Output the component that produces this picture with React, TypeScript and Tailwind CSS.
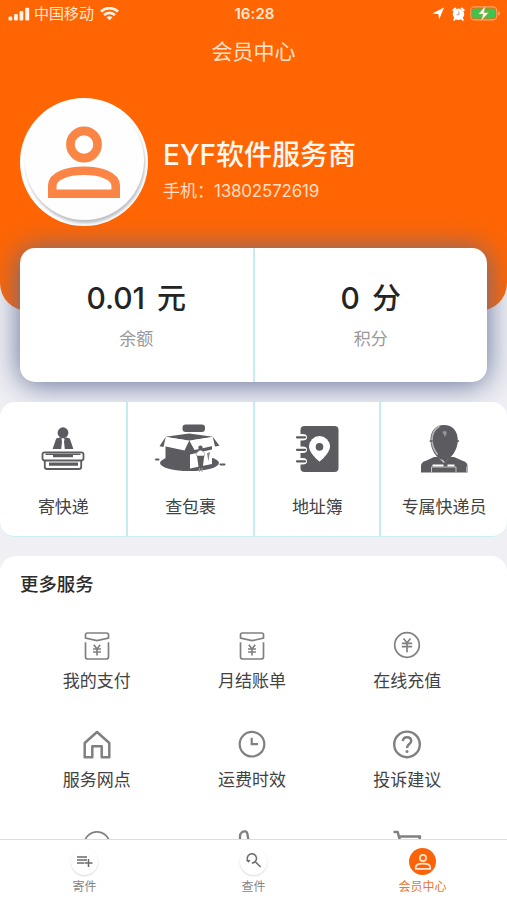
import type { ReactNode } from 'react';

const fontStack = "font-['Inter','Noto_Sans_CJK_SC',sans-serif]";

function StatusBar() {
  return (
    <div className="grid h-[27px] grid-cols-[1fr_auto_1fr] items-center pr-[6px] pl-[8px] text-[#ffe9d6]">
      <div className="flex items-center">
        <svg className="h-[14px] w-[22px]" viewBox="0 0 22 14" fill="#fff3e8">
          <rect x="0.5" y="9.5" width="3.8" height="4" rx="1.2" />
          <rect x="6" y="7" width="3.8" height="6.5" rx="1.2" />
          <rect x="11.5" y="4" width="3.8" height="9.5" rx="1.2" />
          <rect x="17.2" y="0.8" width="4" height="12.7" rx="1.2" />
        </svg>
        <span className="ml-[4px] text-[15px] leading-none">中国移动</span>
        <svg className="ml-[6px] h-[14px] w-[19px]" viewBox="0 0 19 14" fill="none" stroke="#fff3e8" strokeWidth="2.8">
          <path d="M1 4.500C5.800.1 13.200.1 18 4.500" />
          <path d="M4 8.100c3.100-2.900 7.900-2.900 11 0" />
          <path d="M6.400 10.300c1.700-1.500 4.500-1.500 6.200 0L9.500 13.300z" fill="#fff3e8" stroke="none" />
        </svg>
      </div>
      <span className="text-[15px] leading-none font-semibold tracking-[0.1px]">16:28</span>
      <div className="flex items-center justify-end">
        <svg className="h-[13px] w-[12px]" viewBox="0 0 12 13" fill="#fff">
          <path d="M12 .6 7.200 12.300 6.300 7.100.2 6.400z" />
        </svg>
        <svg className="ml-[8px] h-[14px] w-[13px]" viewBox="0 0 13 14">
          <circle cx="6.5" cy="7.300" r="5.700" fill="#fff" />
          <path d="M1.300 3.200 3.200 1.500M11.700 3.200 9.800 1.500M3 11.600l-.8 1.200M10 11.600l.8 1.200" stroke="#fff" strokeWidth="2" strokeLinecap="round" />
          <path d="M6.8 4.400v3.400H4.600" fill="none" stroke="#b9a49c" strokeWidth="1.1" />
        </svg>
        <svg className="ml-[5px] h-[16px] w-[31px]" viewBox="0 0 31 16">
          <rect x="0.7" y="0.900" width="26" height="13" rx="3.6" fill="none" stroke="#ffa163" strokeWidth="1.1" />
          <rect x="2.2" y="2.400" width="23" height="10" rx="2.2" fill="#3ec34f" />
          <path d="M28 4.900c1.500.5 2 1.400 2 2.400s-.5 1.900-2 2.400z" fill="#ffa163" />
          <path d="M15.300.2 8.600 8.100h4.600L11.300 14.500l7.100-7.800h-4.600z" fill="#fff" stroke="#ff9a55" strokeWidth=".4" />
        </svg>
      </div>
    </div>
  );
}

function Avatar() {
  return (
    <div className="flex size-[128px] shrink-0 items-center justify-center rounded-full bg-white">
      <div className="-mt-[3px] flex size-[119px] items-center justify-center rounded-full bg-[#fefefe] shadow-[1px_3px_3px_#bfc1c7]">
        <svg className="mt-[3px] h-[72px] w-[72px]" viewBox="0 0 72 72" fill="none" stroke="#fb8545" strokeWidth="8.6">
          <circle cx="36" cy="18.5" r="13.6" />
          <path d="M4.3 67.7v-8.2C4.3 49.5 20 44.8 36 44.8s31.7 4.7 31.7 14.7v8.2z" />
        </svg>
      </div>
    </div>
  );
}

function Balance({ value, unit, label }: { value: string; unit: string; label: string }) {
  return (
    <div className="flex flex-1 flex-col items-center pt-[30px] first:border-r-2 first:border-[#c5edef]">
      <div className="text-[29px] leading-[40px] font-medium text-[#242424]">
        <span className="text-[30px]">{value}</span>
        <span className="ml-[12px]">{unit}</span>
      </div>
      <div className="mt-[8px] text-[17px] leading-[24px] text-[#999]">{label}</div>
    </div>
  );
}

function DeskIcon() {
  return (
    <svg className="h-[52px] w-[76px]" viewBox="0 0 76 52">
      <g fill="#5b5b60">
        <circle cx="38" cy="9.700" r="5.400" />
        <path d="M31.200 15.400q6.800-2.200 13.600 0L48.400 26H27.600z" />
      </g>
      <path d="m36.400 15.700 1.600-.8 1.600.8-.6 3 .8 7.300h-3.600l.8-7.300z" fill="#fff" />
      <g fill="none" stroke="#5b5b60" strokeWidth="1.800">
        <rect x="17.500" y="29.300" width="41" height="8.200" rx="2.200" />
        <path d="M19.800 37.500v6.200q0 2.300 2.300 2.300h31.800q2.300 0 2.300-2.300v-6.200" />
      </g>
      <path d="M20.500 30.600h35v1.400h-7.500v2.200H28V32h-7.500zM24 39.600h29v3.200H24z" fill="#5b5b60" />
    </svg>
  );
}

function BoxIcon() {
  return (
    <svg className="h-[52px] w-[76px]" viewBox="0 0 76 52" fill="#5b5b60">
      <rect x="29.500" y="1.500" width="22.500" height="7.500" rx="3.300" />
      <ellipse cx="36.500" cy="40" rx="29.500" ry="8" />
      <rect x="2" y="35.500" width="4.500" height="1.900" rx=".9" />
      <rect x="66.500" y="40.500" width="6" height="2" rx="1" />
      <path d="M12.500 17H59v25l-22.500 6-24-6z" />
      <path d="M12.500 13.800 36 10.500l24 3.300-24 4z" />
      <path d="M13 14.200 36.300 17.500 31.500 27.500 10.500 23zM59.700 14.200 36.300 17.500 41.500 27 62 22.500z" fill="#fff" />
      <path d="M12.800 13.800 6.500 23.300l4 .8zM59.700 13.800l6.800 9-4.500.8z" />
      <path d="m37 31.500 22-5v14.500L37 45.500z" fill="#fff" />
      <circle cx="47.500" cy="24.800" r="2.200" />
      <path d="M43 31q4.500-7.500 9 0l-1 2.500h-7z" fill="#fff" stroke="#85858a" strokeWidth=".6" />
      <path d="M44 32.700h7.200l-1.400 11.800h-4.200z" />
      <path d="M54 30.200l3-1.200-1.600 9.500z" fill="#8a8a8e" />
      <path d="M46.500 45v3.800M49 45v3.800" stroke="#a0a0a3" strokeWidth="1.100" />
    </svg>
  );
}

function AddressBookIcon() {
  return (
    <svg className="h-[52px] w-[76px]" viewBox="0 0 76 52">
      <rect x="21.500" y="3" width="38" height="46" rx="4" fill="#5b5b60" />
      {[14.300, 26.800, 38.300].map((y) => (
        <g key={y}>
          <path d={`M17 ${y - 3.300}h6.500q4.500 0 4.500 3.300t-4.500 3.300H17z`} fill="#fff" />
          <path d={`M18 ${y}H26`} stroke="#5b5b60" strokeWidth="2.300" strokeLinecap="round" />
        </g>
      ))}
      <path d="M40.500 38.800S30 30.200 30 23.600a10.500 10.500 0 0 1 21 0c0 6.600-10.500 15.200-10.500 15.200z" fill="#fff" />
      <circle cx="40.500" cy="23.900" r="3.800" fill="#5b5b60" />
    </svg>
  );
}

function CourierIcon() {
  return (
    <svg className="h-[52px] w-[76px]" viewBox="0 0 76 52">
      <path d="M15 49.500v-6.500q0-4 5-5.300l8-3.700h20l8.500 3.700q5 1.300 5 5.300v6.500z" fill="#5b5b60" />
      <path d="M30 32.500 38 40l8-7.500-2-4H32z" fill="#d8d8da" />
      <path d="m33.500 33 5.500 6.500 6.500-7z" fill="#5b5b60" />
      <path d="M26.500 41.500h11v2h-11zM41.500 41.500h7v2h-7z" fill="#fff" />
      <path d="M25.500 49.500v-5.500h24.500v5.500" fill="none" stroke="#ddd" strokeWidth=".8" />
      <path d="M60.500 43.500v6" fill="none" stroke="#aaa" strokeWidth="1" />
      <path d="M38 2.100c-8.300 0-13.500 5.900-13.500 15 0 8.500 5.900 20 13.500 20s13.800-11 13.800-20c0-9.100-5.500-15-13.800-15z" fill="#5b5b60" />
      <path d="M33.500 3.300q-7.500 4-7.500 13.500 0 8 5.500 14.800" fill="none" stroke="#b5b5b8" strokeWidth="1.700" />
      <path d="M23.700 18h3M50 18h3" stroke="#5b5b60" strokeWidth="1.600" />
      <path d="M36.800 8.500q3.800-1.400 3.800 1.300 0 3.200-2.600 4l.3-2.500-1.500-.8z" fill="#98989c" />
    </svg>
  );
}

function VoucherIcon() {
  return (
    <svg className="h-[30px] w-[30px]" viewBox="0 0 30 30" fill="none" stroke="#808080" strokeWidth="1.700">
      <path d="M3.500 3.900q0-1.900 1.900-1.900h19.200q1.900 0 1.900 1.900v3.200L15 9.700 3.500 7.100z" />
      <path d="M3.500 11.300v14.400q0 2.300 2.300 2.300h18.400q2.300 0 2.300-2.300V11.300" />
      <path d="m11.800 13.700 3.200 4.200 3.200-4.200M11 18h8M11 21h8M15 18v6.500" />
    </svg>
  );
}

function RechargeIcon() {
  return (
    <svg className="h-[30px] w-[30px]" viewBox="0 0 30 30" fill="none" stroke="#808080" strokeWidth="1.700">
      <circle cx="15" cy="14" r="12.300" />
      <path d="m11.500 7.500 3.500 4.200 3.500-4.200M9.800 12.300h10.400M9.800 15.600h10.400M15 11.700v9.600" />
    </svg>
  );
}

function HomeIcon() {
  return (
    <svg className="h-[30px] w-[30px]" viewBox="0 0 30 30" fill="none" stroke="#808080" strokeWidth="2.500" strokeLinejoin="round">
      <path d="M2.700 27.200V13L15 2l12.300 11v14.200h-7.600v-11h-9.400v11z" />
    </svg>
  );
}

function ClockIcon() {
  return (
    <svg className="h-[30px] w-[30px]" viewBox="0 0 30 30" fill="none" stroke="#808080" strokeWidth="2.200">
      <circle cx="15" cy="14.200" r="12.300" />
      <path d="M14.700 7.700v6.500h6.300" />
    </svg>
  );
}

function HelpIcon() {
  return (
    <svg className="h-[30px] w-[30px]" viewBox="0 0 30 30" fill="none" stroke="#808080" strokeWidth="2.400">
      <circle cx="15" cy="14.400" r="12.800" />
      <path d="M10.800 11.200c.2-2.600 1.800-4 4.200-4s4.200 1.500 4.200 3.800c0 3.100-4.200 3-4.200 6.900" strokeWidth="2.500" />
      <circle cx="15" cy="21.600" r="1.500" fill="#808080" stroke="none" />
    </svg>
  );
}

function CircleIcon() {
  return (
    <svg className="h-[30px] w-[30px]" viewBox="0 0 30 30" fill="none" stroke="#808080" strokeWidth="1.700">
      <circle cx="15" cy="15.700" r="12.800" />
    </svg>
  );
}

function PhoneIcon() {
  return (
    <svg className="h-[30px] w-[30px]" viewBox="0 0 30 30" fill="none" stroke="#808080" strokeWidth="2.300">
      <path d="M3 11.500V7.500C3 3.500 6 2 8.500 2.400c1.800.4 1.800 1.600 2.100 3.600l.9 5.500-3 3c2 4 4 6 8 8l3-3 6 1q3 .5 2 4-1 4-6 3C11 26 4 19 3 11.500z" />
    </svg>
  );
}

function CartIcon() {
  return (
    <svg className="h-[30px] w-[30px]" viewBox="0 0 30 30" fill="none" stroke="#808080" strokeWidth="2.500">
      <path d="M1.500 3h4.200l4.800 18h15L28 7.500H7" strokeLinejoin="round" />
      <circle cx="12" cy="26" r="2" />
      <circle cx="24" cy="26" r="2" />
    </svg>
  );
}

const shortcuts = [
  { label: '寄快递', icon: <DeskIcon /> },
  { label: '查包裹', icon: <BoxIcon /> },
  { label: '地址簿', icon: <AddressBookIcon /> },
  { label: '专属快递员', icon: <CourierIcon /> },
];

const services: { label: string; icon: ReactNode }[] = [
  { label: '我的支付', icon: <VoucherIcon /> },
  { label: '月结账单', icon: <VoucherIcon /> },
  { label: '在线充值', icon: <RechargeIcon /> },
  { label: '服务网点', icon: <HomeIcon /> },
  { label: '运费时效', icon: <ClockIcon /> },
  { label: '投诉建议', icon: <HelpIcon /> },
  { label: '', icon: <CircleIcon /> },
  { label: '', icon: <PhoneIcon /> },
  { label: '', icon: <CartIcon /> },
];

function TabBar() {
  return (
    <nav className="grid h-[61px] shrink-0 grid-cols-3 border-t border-[#dedede] bg-white text-[12px] text-[#858585]">
      <div className="flex flex-col items-center pt-[8px]">
        <div className="flex size-[27px] items-center justify-center rounded-full bg-white shadow-[0_1px_2px_#d8d8d8]">
          <svg className="mb-[2px] h-[14px] w-[17px]" viewBox="0 0 17 14" fill="none" stroke="#6a6a6a" strokeWidth="1.500">
            <path d="M1 3h10M1 6h10M1 9h7M12.500 5v8M8.500 9h8" />
          </svg>
        </div>
        <span className="mt-[3px] leading-[18px]">寄件</span>
      </div>
      <div className="flex flex-col items-center pt-[8px]">
        <div className="flex size-[27px] items-center justify-center rounded-full bg-white shadow-[0_1px_2px_#d8d8d8]">
          <svg className="mb-[2px] h-[16px] w-[17px]" viewBox="0 0 17 16" fill="none" stroke="#707070" strokeWidth="1.600">
            <path d="M3.300 8.300A4.600 4.600 0 1 1 6.800 10M10.600 9l5 5" />
            <path d="m.8 7 2.800 2.800L5.700 7z" fill="#707070" stroke="none" />
          </svg>
        </div>
        <span className="mt-[3px] leading-[18px]">查件</span>
      </div>
      <div className="flex flex-col items-center pt-[8px] text-[#ec7530]">
        <div className="flex size-[27px] items-center justify-center rounded-full bg-[#fa6307]">
          <svg className="h-[18px] w-[18px]" viewBox="0 0 18 18" fill="none" stroke="#ffe5d2" strokeWidth="1.700">
            <circle cx="9" cy="5" r="3.100" />
            <path d="M1.800 15.800v-1.600c0-2.500 3.600-3.600 7.200-3.600s7.200 1.100 7.200 3.600v1.600z" />
          </svg>
        </div>
        <span className="mt-[3px] leading-[18px]">会员中心</span>
      </div>
    </nav>
  );
}

export default function App() {
  return (
    <div className={`flex h-[900px] w-[507px] flex-col overflow-hidden bg-[#efeff4] ${fontStack}`}>
      <header className="h-[311px] shrink-0 rounded-b-[28px] bg-[#ff6503]">
        <StatusBar />
        <h1 className="mt-[9px] text-center text-[21px] leading-[32px] font-normal text-[#ffe3c8]">会员中心</h1>
        <div className="mt-[30px] flex items-start pl-[20px]">
          <Avatar />
          <div className="ml-[15px] pt-[37px]">
            <div className="text-[28px] leading-[40px] font-medium text-[#fff8ef]">EYF软件服务商</div>
            <div className="mt-[4px] text-[17px] leading-[24px] text-[#ffdfc5]">
              手机：<span className="tracking-[-0.2px]">13802572619</span>
            </div>
          </div>
        </div>
      </header>

      <section className="mx-[20px] -mt-[63px] flex h-[134px] shrink-0 overflow-hidden rounded-[15px] bg-white shadow-[0_2px_30px_#5c6c94]">
        <Balance value="0.01" unit="元" label="余额" />
        <Balance value="0" unit="分" label="积分" />
      </section>

      <section className="z-10 mt-[20px] grid h-[135px] shrink-0 grid-cols-4 overflow-hidden rounded-[15px] border-b border-[#ccf0f0] bg-white">
        {shortcuts.map(({ label, icon }) => (
          <div key={label} className="-ml-px flex flex-col items-center border-l-2 border-[#c5edef] pt-[21px] first:ml-0 first:border-l-0">
            {icon}
            <span className="mt-[20px] text-[17px] leading-[24px] text-[#424242]">{label}</span>
          </div>
        ))}
      </section>

      <section className="mt-[19px] min-h-0 flex-1 overflow-hidden rounded-t-[16px] bg-white">
        <h2 className="pt-[14px] pl-[20px] text-[18.400px] leading-[28px] font-medium text-[#2c2c2c]">更多服务</h2>
        <div className="mr-[22px] ml-[19px] grid auto-rows-[99px] grid-cols-3 pt-[33px]">
          {services.map(({ label, icon }, i) => (
            <div key={i} className="flex flex-col items-center">
              {icon}
              <span className="mt-[8px] text-[17px] leading-[24px] text-[#424242]">{label}</span>
            </div>
          ))}
        </div>
      </section>
      <TabBar />
    </div>
  );
}
